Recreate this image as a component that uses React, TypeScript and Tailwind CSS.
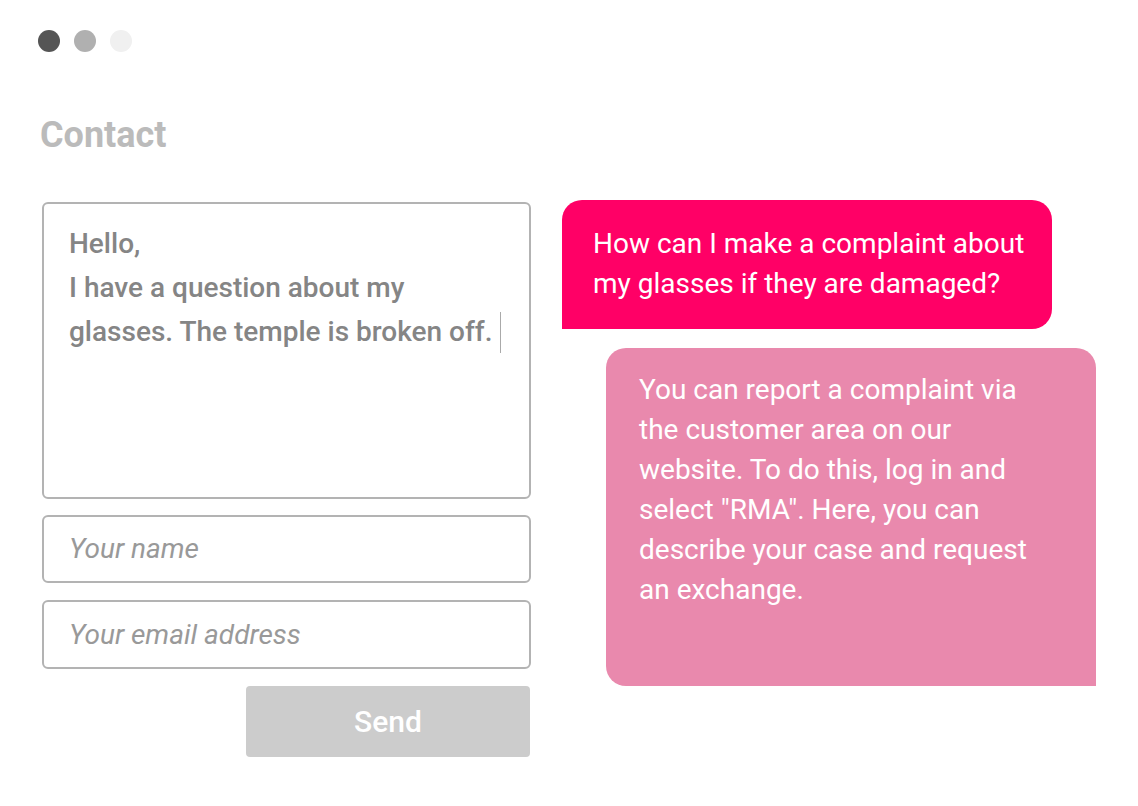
import React from 'react';

const App: React.FC = () => {
  return (
    <div className="min-h-screen w-full bg-white text-[#808080]" style={{ fontFamily: 'Roboto, "Liberation Sans", sans-serif' }}>
      <div className="px-[38px] pt-[30px]">
        {/* Window dots */}
        <div className="flex items-center gap-[14px]">
          <span className="h-[22px] w-[22px] rounded-full bg-[#555555]" />
          <span className="h-[22px] w-[22px] rounded-full bg-[#b0b0b0]" />
          <span className="h-[22px] w-[22px] rounded-full bg-[#f0f0f0]" />
        </div>

        <h1 className="mt-[61px] pl-[2px] text-[36px] font-bold leading-[44px] text-[#bbbbbb]">Contact</h1>

        <div className="mt-[45px] flex items-start gap-[31px] pl-[4px]">
          {/* Form */}
          <div className="flex w-[489px] flex-col">
            <div className="h-[297px] rounded-[6px] border-2 border-[#b3b3b3] px-[25px] pt-[18px] text-[28px] font-medium leading-[44px] text-[#858585]">
              <div>Hello,</div>
              <div>I have a question about my</div>
              <div className="flex items-center">
                glasses. The temple is broken off.
                <span className="ml-[7px] inline-block h-[41px] w-px bg-[#aaaaaa]" />
              </div>
            </div>
            <div className="mt-[16px] flex h-[68px] items-center rounded-[6px] border-2 border-[#b3b3b3] px-[25px] text-[28px] italic text-[#999999]">
              Your name
            </div>
            <div className="mt-[17px] flex h-[69px] items-center rounded-[6px] border-2 border-[#b3b3b3] px-[25px] text-[28px] italic text-[#999999]">
              Your email address
            </div>
            <div className="mt-[17px] flex justify-end pr-px">
              <button className="flex h-[71px] w-[284px] items-center justify-center rounded-[4px] bg-[#cccccc] text-[30px] font-medium text-white">
                Send
              </button>
            </div>
          </div>

          {/* Chat */}
          <div className="-mt-[2px] flex flex-col">
            <div className="h-[129px] w-[490px] rounded-t-[20px] rounded-br-[20px] bg-[#ff0066] pl-[31px] pr-[16px] pt-[24px] text-[28px] leading-[40px] text-white">
              How can I make a complaint about my glasses if they are damaged?
            </div>
            <div className="ml-[44px] mt-[19px] h-[338px] w-[490px] rounded-t-[20px] rounded-bl-[20px] bg-[#e989ad] pl-[33px] pr-[50px] pt-[22px] text-[28px] leading-[40px] text-white">
              You can report a complaint via the customer area on our website. To do this, log in and select "RMA". Here, you can describe your case and request an exchange.
            </div>
          </div>
        </div>
      </div>
    </div>
  );
};

export default App;
